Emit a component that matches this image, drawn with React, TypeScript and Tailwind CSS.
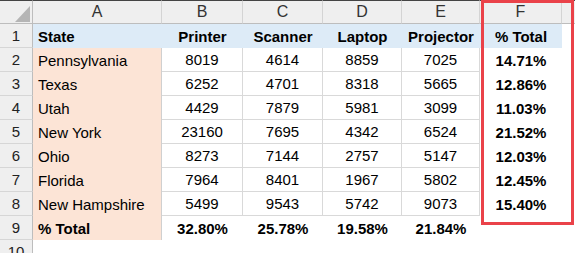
const rows: [string, number, number, number, number, string][] = [
  ["Pennsylvania", 8019, 4614, 8859, 7025, "14.71%"],
  ["Texas", 6252, 4701, 8318, 5665, "12.86%"],
  ["Utah", 4429, 7879, 5981, 3099, "11.03%"],
  ["New York", 23160, 7695, 4342, 6524, "21.52%"],
  ["Ohio", 8273, 7144, 2757, 5147, "12.03%"],
  ["Florida", 7964, 8401, 1967, 5802, "12.45%"],
  ["New Hampshire", 5499, 9543, 5742, 9073, "15.40%"],
];

const totals = ["32.80%", "25.78%", "19.58%", "21.84%"];
const letters = ["A", "B", "C", "D", "E", "F"];

function RowHead({ n }: { n: number }) {
  return (
    <div className="flex items-center justify-center bg-[#efefef] border-r border-b border-r-[#bdbdbd] border-b-[#d6d6d6] text-[#222]">
      {n}
    </div>
  );
}

export default function App() {
  return (
    <div className="relative w-[575px] h-[253px] overflow-hidden bg-white font-['Liberation_Sans',Arial,sans-serif] text-[15px] text-black leading-none">
      <div className="grid grid-cols-[33px_129px_81px_80px_79px_78px_82px_13px] auto-rows-[24px]">
        {/* column headers */}
        <div className="relative bg-[#efefef] border-t border-t-[#444] border-r border-b border-r-[#bdbdbd] border-b-[#bdbdbd]">
          <svg className="absolute left-0 top-0" width="32" height="23" viewBox="0 0 32 23">
            <polygon points="30,5 30,21 15,21" fill="#b5b5b5" />
          </svg>
        </div>
        {letters.map((l) => (
          <div
            key={l}
            className="flex items-center justify-center bg-[#efefef] border-t border-t-[#444] border-r border-b border-r-[#d4d4d4] border-b-[#bdbdbd] text-[#333] text-[16px]"
          >
            {l}
          </div>
        ))}
        <div className="bg-[#efefef] border-t border-t-[#444] border-b border-b-[#bdbdbd]" />

        {/* row 1 */}
        <RowHead n={1} />
        <div className="flex items-center pl-[5px] bg-[#ddebf7] font-bold">State</div>
        {["Printer", "Scanner", "Laptop", "Projector", "% Total"].map((h) => (
          <div key={h} className="flex items-center justify-center bg-[#ddebf7] font-bold">
            {h}
          </div>
        ))}
        <div />

        {/* data rows */}
        {rows.map((r, i) => (
          <div key={r[0]} className="contents">
            <RowHead n={i + 2} />
            <div className="flex items-center pl-[5px] bg-[#fce4d6] border-r border-r-[#d0d0d0]">{r[0]}</div>
            {[r[1], r[2], r[3], r[4]].map((v, j) => (
              <div key={j} className="flex items-center justify-center border-r border-b border-[#d9d9d9]">
                {v}
              </div>
            ))}
            <div className="flex items-center justify-center font-bold">{r[5]}</div>
            <div />
          </div>
        ))}

        {/* totals row */}
        <RowHead n={9} />
        <div className="flex items-center pl-[5px] bg-[#fce4d6] border-r border-r-[#d0d0d0] font-bold">% Total</div>
        {totals.map((t) => (
          <div key={t} className="flex items-center justify-center font-bold">
            {t}
          </div>
        ))}
        <div />
        <div />

        {/* row 10 */}
        <RowHead n={10} />
        <div />
        <div />
        <div />
        <div />
        <div />
        <div />
        <div />
      </div>

      <div className="absolute left-[481px] top-0 w-[93px] h-[225px] border-[3px] border-[#ea4249]" />
    </div>
  );
}
